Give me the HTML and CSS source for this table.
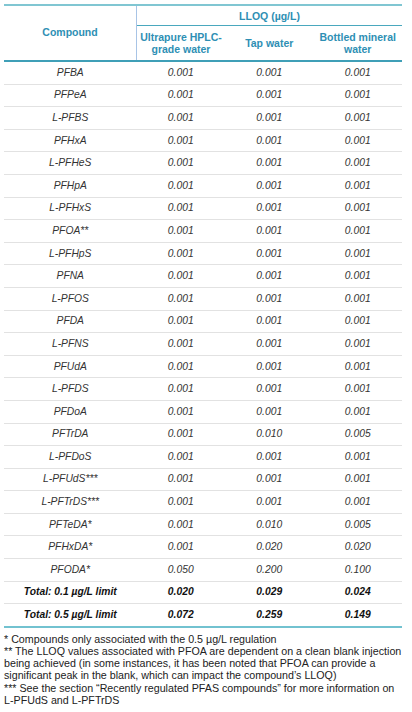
FILE: index.html
```html
<!DOCTYPE html>
<html>
<head>
<meta charset="utf-8">
<link rel="stylesheet" href="styles.css">
</head>
<body>
<div class="page">
<table class="lloq">
  <thead>
    <tr>
      <th class="compound-head" rowspan="2">Compound</th>
      <th class="group-head" colspan="3">LLOQ (µg/L)</th>
    </tr>
    <tr class="sub">
      <th class="c2">Ultrapure HPLC-<br>grade water</th>
      <th class="c3">Tap water</th>
      <th class="c4">Bottled mineral<br>water</th>
    </tr>
  </thead>
  <tbody>
    <tr><td>PFBA</td><td>0.001</td><td>0.001</td><td>0.001</td></tr>
    <tr><td>PFPeA</td><td>0.001</td><td>0.001</td><td>0.001</td></tr>
    <tr><td>L-PFBS</td><td>0.001</td><td>0.001</td><td>0.001</td></tr>
    <tr><td>PFHxA</td><td>0.001</td><td>0.001</td><td>0.001</td></tr>
    <tr><td>L-PFHeS</td><td>0.001</td><td>0.001</td><td>0.001</td></tr>
    <tr><td>PFHpA</td><td>0.001</td><td>0.001</td><td>0.001</td></tr>
    <tr><td>L-PFHxS</td><td>0.001</td><td>0.001</td><td>0.001</td></tr>
    <tr><td>PFOA**</td><td>0.001</td><td>0.001</td><td>0.001</td></tr>
    <tr><td>L-PFHpS</td><td>0.001</td><td>0.001</td><td>0.001</td></tr>
    <tr><td>PFNA</td><td>0.001</td><td>0.001</td><td>0.001</td></tr>
    <tr><td>L-PFOS</td><td>0.001</td><td>0.001</td><td>0.001</td></tr>
    <tr><td>PFDA</td><td>0.001</td><td>0.001</td><td>0.001</td></tr>
    <tr><td>L-PFNS</td><td>0.001</td><td>0.001</td><td>0.001</td></tr>
    <tr><td>PFUdA</td><td>0.001</td><td>0.001</td><td>0.001</td></tr>
    <tr><td>L-PFDS</td><td>0.001</td><td>0.001</td><td>0.001</td></tr>
    <tr><td>PFDoA</td><td>0.001</td><td>0.001</td><td>0.001</td></tr>
    <tr><td>PFTrDA</td><td>0.001</td><td>0.010</td><td>0.005</td></tr>
    <tr><td>L-PFDoS</td><td>0.001</td><td>0.001</td><td>0.001</td></tr>
    <tr><td>L-PFUdS***</td><td>0.001</td><td>0.001</td><td>0.001</td></tr>
    <tr><td>L-PFTrDS***</td><td>0.001</td><td>0.001</td><td>0.001</td></tr>
    <tr><td>PFTeDA*</td><td>0.001</td><td>0.010</td><td>0.005</td></tr>
    <tr><td>PFHxDA*</td><td>0.001</td><td>0.020</td><td>0.020</td></tr>
    <tr><td>PFODA*</td><td>0.050</td><td>0.200</td><td>0.100</td></tr>
    <tr class="total"><td>Total: 0.1 µg/L limit</td><td>0.020</td><td>0.029</td><td>0.024</td></tr>
    <tr class="total last"><td>Total: 0.5 µg/L limit</td><td>0.072</td><td>0.259</td><td>0.149</td></tr>
  </tbody>
</table>
<div class="notes">
  <p>* Compounds only associated with the 0.5 µg/L regulation</p>
  <p>** The LLOQ values associated with PFOA are dependent on a clean blank injection being achieved (in some instances, it has been noted that PFOA can provide a significant peak in the blank, which can impact the compound’s LLOQ)</p>
  <p>*** See the section “Recently regulated PFAS compounds” for more information on <span class="nw">L-PFUdS</span> and <span class="nw">L-PFTrDS</span></p>
</div>
</div>
</body>
</html>
```
FILE: styles.css
```css
html, body {
  margin: 0;
  padding: 0;
  background: #ffffff;
}
body {
  font-family: "Liberation Sans", Arial, sans-serif;
  color: #222;
}
.page {
  padding: 4px 4px 0 4px;
}
.lloq {
  width: 398px;
  border-collapse: collapse;
  table-layout: fixed;
  font-size: 10.3px;
}
.lloq thead tr:first-child th {
  border-top: 2px solid #80c6d2;
}
.lloq th {
  color: #2e8fb4;
  font-weight: bold;
  font-size: 10.5px;
  line-height: 12px;
  text-align: center;
  padding: 0;
}
.compound-head {
  width: 132px;
  border-right: 1px solid #a8c4e6;
  border-bottom: 2px solid #3f9fb7;
  padding-bottom: 2px !important;
}
.group-head {
  height: 19px;
  border-bottom: 1px solid #4aa8be;
}
.sub th {
  height: 34px;
  border-bottom: 2px solid #3f9fb7;
}
.sub .c2 { width: 94px; }
.sub .c3 { width: 84px; }
.sub .c4 { width: 88px; }
.lloq td {
  height: 21.6px;
  padding: 0;
  text-align: center;
  font-style: italic;
  color: #333;
  border-bottom: 1px solid #e2e2e2;
  line-height: 12px;
}
.lloq tr.total td {
  font-weight: bold;
  color: #111;
}
.lloq tr.last td {
  border-bottom: 2px solid #72c2d0;
}
.notes {
  margin-top: 5px;
  font-size: 10.7px;
  line-height: 12.2px;
  color: #222;
}
.notes p {
  margin: 0;
}
.nw {
  white-space: nowrap;
}
```
